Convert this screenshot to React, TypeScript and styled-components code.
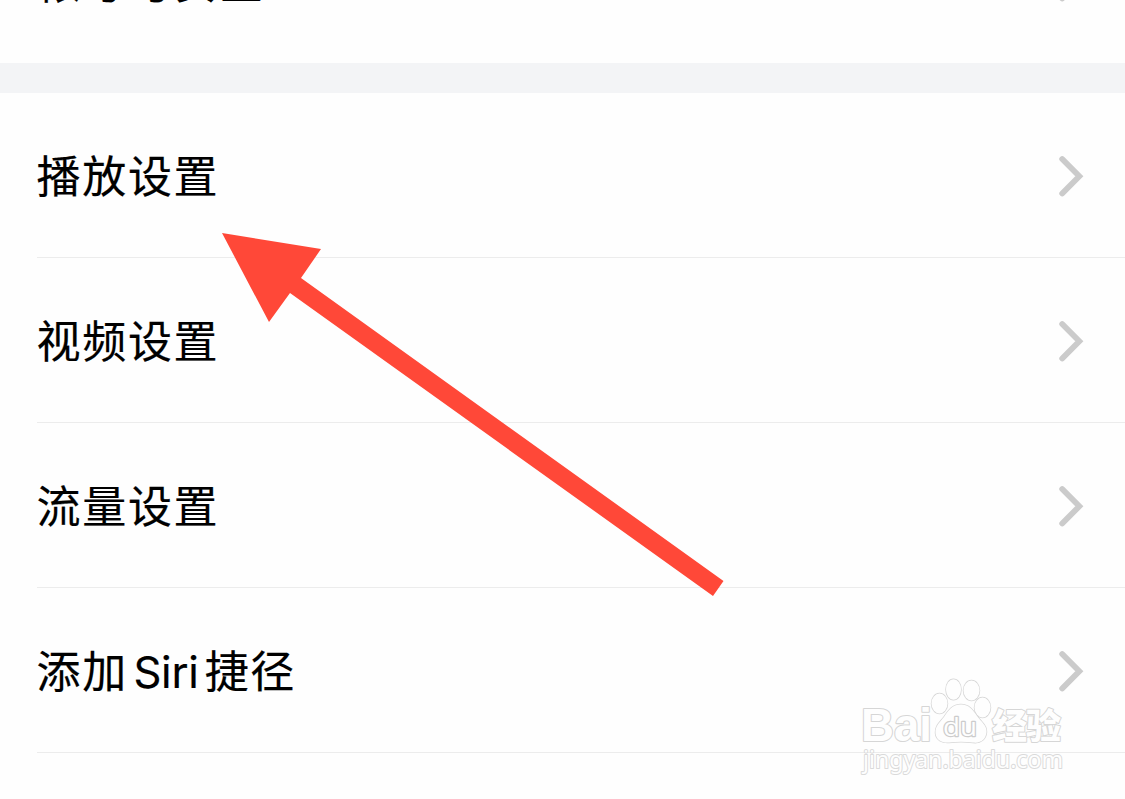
import React from 'react';
import styled, { createGlobalStyle } from 'styled-components';

const GlobalStyle = createGlobalStyle`
  * { box-sizing: border-box; }
  body { margin: 0; background: #fefefe; overflow: hidden; }
`;

const Screen = styled.main`
  position: relative;
  width: 1125px;
  height: 799px;
  overflow: hidden;
  display: flex;
  flex-direction: column;
  background: #fefefe;
  color: #000;
  font-family: Inter, 'Noto Sans CJK SC', sans-serif;
`;

const Group = styled.section<{ $clipped?: boolean }>`
  display: flex;
  flex-direction: column;
  flex: none;
  justify-content: flex-end;
  ${(p) => p.$clipped && 'height: 63px; overflow: hidden;'}
`;

const Divider = styled.div`
  flex: none;
  height: 30px;
  background: #f3f4f6;
`;

const Row = styled.div<{ $line?: boolean }>`
  display: flex;
  flex: none;
  align-items: center;
  justify-content: space-between;
  height: 165px;
  margin-left: 37px;
  padding: 1px 41px 0 0;
  border-bottom: ${(p) => (p.$line ? '1px solid #ececec' : 'none')};
`;

const Label = styled.span<{ $drop?: number }>`
  display: flex;
  align-items: baseline;
  margin-left: -0.5px;
  padding-top: ${(p) => p.$drop ?? 2}px;
  font-size: 44px;
  line-height: 66px;
  letter-spacing: 1.7px;
  white-space: pre;
  -webkit-text-stroke: 0.2px #000;
`;

const Latin = styled.span`
  margin: 0 6px 0 5.5px;
  font-size: 43.5px;
  letter-spacing: -0.2px;
`;

const ChevronIcon = styled.svg`
  flex: none;
  width: 26px;
  height: 42px;
  fill: none;
  stroke: #cbcbcb;
  stroke-width: 5.8;
  stroke-linecap: round;
`;

const Chevron = () => (
  <ChevronIcon viewBox="0 0 26 42">
    <path d="M4.2 4 L21.3 21.3 L4.2 38.5" />
  </ChevronIcon>
);

const Arrow = styled.svg`
  position: absolute;
  left: 0;
  top: 0;
  width: 1125px;
  height: 799px;
  pointer-events: none;
`;

const Watermark = styled.svg`
  position: absolute;
  left: 855px;
  top: 672px;
  width: 220px;
  height: 110px;
  pointer-events: none;
  fill: #fefefe;
  stroke: #d6d6d6;
  stroke-width: 1.5;
  paint-order: stroke;
  stroke-linejoin: round;
`;

export default function App() {
  return (
    <>
      <GlobalStyle />
      <Screen>
        <Group $clipped>
          <Row>
            <Label $drop={4}>帐号与安全</Label>
            <Chevron />
          </Row>
        </Group>
        <Divider />
        <Group>
          {['播放设置', '视频设置', '流量设置'].map((name) => (
            <Row key={name} $line>
              <Label>{name}</Label>
              <Chevron />
            </Row>
          ))}
          <Row $line>
            <Label>
              添加<Latin>Siri</Latin>捷径
            </Label>
            <Chevron />
          </Row>
        </Group>
        <Arrow viewBox="0 0 1125 799">
          <path fill="#ff4838" d="M222 233 L321 249 L301 278 L723.5 581 L713 596 L290 293 L269 322 Z" />
        </Arrow>
        <Watermark viewBox="855 672 220 110">
          <text x="861" y="741" fontFamily="'Liberation Sans', sans-serif" fontWeight="700" fontSize="46" textLength="71" lengthAdjust="spacingAndGlyphs" strokeWidth="2.2">Bai</text>
          <ellipse cx="939.5" cy="703.5" rx="8" ry="10" />
          <ellipse cx="953.5" cy="689.5" rx="7.5" ry="10.3" />
          <ellipse cx="971.5" cy="690.5" rx="8" ry="10" />
          <ellipse cx="982.5" cy="707.5" rx="8" ry="10" />
          <path d="M961 704.5 C952 704.5 948 711 944 717 C940 722 935 726 935.5 733 C936 740 942 743 949 742.5 C957 741.5 965 741.5 973 742.5 C981 743.5 986 739 986.5 732 C987 725 981 722 977 716 C973 710 969 704.5 961 704.5 Z" />
          <text x="943" y="736" fontFamily="'Open Sans', sans-serif" fontWeight="400" fontSize="25.5" textLength="34" lengthAdjust="spacingAndGlyphs" stroke="#cccccc" strokeWidth="2.4">du</text>
          <text x="992" y="739" fontFamily="'Noto Sans CJK SC', sans-serif" fontWeight="900" fontSize="35" textLength="69" strokeWidth="2">经验</text>
          <text x="863" y="768" fontFamily="'Noto Sans', sans-serif" fontWeight="400" fontSize="24" textLength="200" lengthAdjust="spacingAndGlyphs" stroke="#dadada" strokeWidth="2">jingyan.baidu.com</text>
        </Watermark>
      </Screen>
    </>
  );
}
